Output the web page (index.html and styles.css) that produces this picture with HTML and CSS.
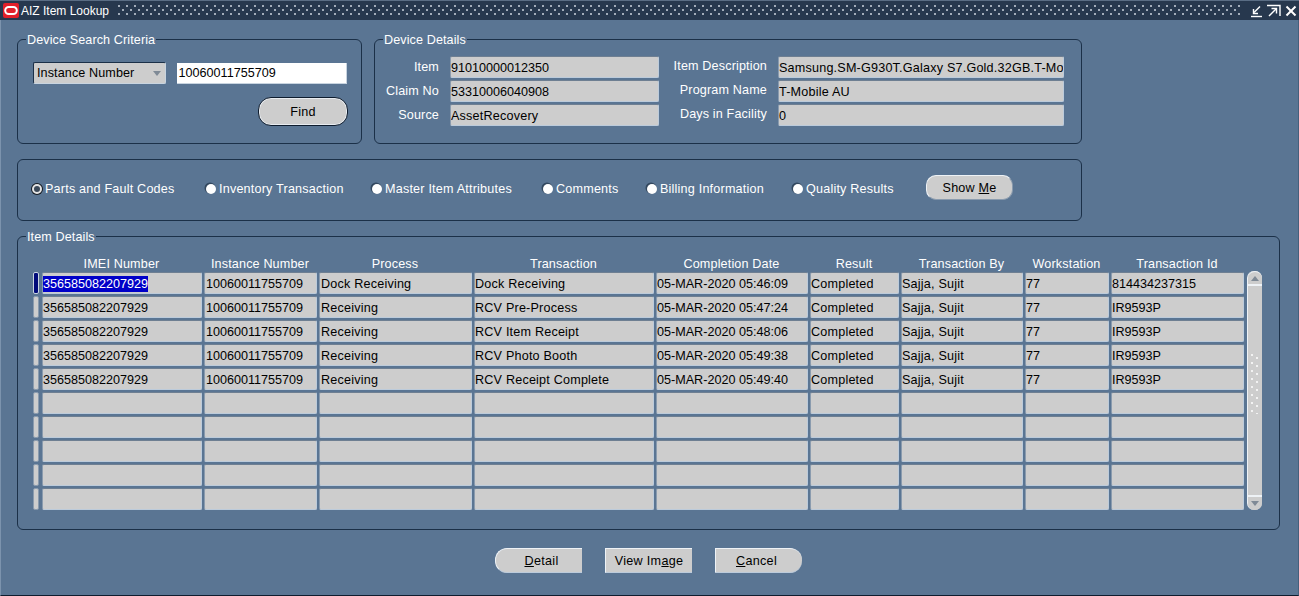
FILE: index.html
```html
<!DOCTYPE html>
<html lang="en">
<head>
    <meta charset="UTF-8">
    <meta name="viewport" content="width=device-width, initial-scale=1.0">
    <title>AIZ Item Lookup</title>
    <link rel="stylesheet" href="styles.css">
</head>
<body>
<div class="window">
    <div class="titlebar">
        <svg class="logo" width="18" height="17" viewBox="0 0 18 17">
            <rect x="1" y="1" width="16" height="15" rx="2" fill="#e3202a"/>
            <rect x="3.2" y="5" width="11.6" height="7" rx="3.5" fill="none" stroke="#fff" stroke-width="2"/>
        </svg>
        <span class="title">AIZ Item Lookup</span>
        <div class="dots"></div>
        <div class="winbtns">
            <svg width="14" height="14" viewBox="0 0 14 14" fill="none" stroke="#fff" stroke-width="1.4">
                <path d="M1 12.5H12"/><path d="M10 2.5L4 8.5"/><path d="M3.5 5V9.5H8"/>
            </svg>
            <svg width="14" height="14" viewBox="0 0 14 14" fill="none" stroke="#fff" stroke-width="1.4">
                <path d="M0 1.5H13V12"/><path d="M2 12L9 5"/><path d="M4.5 4.5H9.5V9.5"/>
            </svg>
            <svg width="14" height="14" viewBox="0 0 14 14" fill="none" stroke="#fff" stroke-width="2">
                <path d="M2.5 2.5L11.5 11.5"/><path d="M11.5 2.5L2.5 11.5"/>
            </svg>
        </div>
    </div>

    <div class="content">
        <div class="top-row">
            <fieldset class="group search-group">
                <legend>Device Search Criteria</legend>
                <div class="search-row">
                    <div class="poplist">
                        <span>Instance Number</span>
                        <i class="arrow"></i>
                    </div>
                    <div class="text-input">10060011755709</div>
                </div>
                <div class="find-row">
                    <div class="btn btn-find">Find</div>
                </div>
            </fieldset>

            <fieldset class="group details-group">
                <legend>Device Details</legend>
                <div class="details-grid">
                    <label class="lbl">Item</label>
                    <div class="cell">91010000012350</div>
                    <label class="lbl lbl-up">Item Description</label>
                    <div class="cell cell-text">Samsung.SM-G930T.Galaxy S7.Gold.32GB.T-Mobile</div>
                    <label class="lbl">Claim No</label>
                    <div class="cell">53310006040908</div>
                    <label class="lbl lbl-up">Program Name</label>
                    <div class="cell cell-text">T-Mobile AU</div>
                    <label class="lbl">Source</label>
                    <div class="cell cell-text">AssetRecovery</div>
                    <label class="lbl lbl-up">Days in Facility</label>
                    <div class="cell">0</div>
                </div>
            </fieldset>
        </div>

        <div class="group radio-group">
            <div class="radio r1 checked"><i></i>Parts and Fault Codes</div>
            <div class="radio r2"><i></i>Inventory Transaction</div>
            <div class="radio r3"><i></i>Master Item Attributes</div>
            <div class="radio r4"><i></i>Comments</div>
            <div class="radio r5"><i></i>Billing Information</div>
            <div class="radio r6"><i></i>Quality Results</div>
            <div class="btn btn-show"><span>Show <u>M</u>e</span></div>
        </div>

        <fieldset class="group items-group">
            <legend>Item Details</legend>
            <div class="items-wrap">
                <div class="items-table">
                    <div class="head"></div>
                    <div class="head">IMEI Number</div>
                    <div class="head">Instance Number</div>
                    <div class="head">Process</div>
                    <div class="head">Transaction</div>
                    <div class="head">Completion Date</div>
                    <div class="head">Result</div>
                    <div class="head">Transaction By</div>
                    <div class="head">Workstation</div>
                    <div class="head">Transaction Id</div>

                    <div class="marker current"></div>
                    <div class="cell"><span class="selected">356585082207929</span></div>
                    <div class="cell">10060011755709</div>
                    <div class="cell">Dock Receiving</div>
                    <div class="cell">Dock Receiving</div>
                    <div class="cell">05-MAR-2020 05:46:09</div>
                    <div class="cell">Completed</div>
                    <div class="cell">Sajja, Sujit</div>
                    <div class="cell">77</div>
                    <div class="cell">814434237315</div>

                    <div class="marker"></div>
                    <div class="cell">356585082207929</div>
                    <div class="cell">10060011755709</div>
                    <div class="cell">Receiving</div>
                    <div class="cell">RCV Pre-Process</div>
                    <div class="cell">05-MAR-2020 05:47:24</div>
                    <div class="cell">Completed</div>
                    <div class="cell">Sajja, Sujit</div>
                    <div class="cell">77</div>
                    <div class="cell">IR9593P</div>

                    <div class="marker"></div>
                    <div class="cell">356585082207929</div>
                    <div class="cell">10060011755709</div>
                    <div class="cell">Receiving</div>
                    <div class="cell">RCV Item Receipt</div>
                    <div class="cell">05-MAR-2020 05:48:06</div>
                    <div class="cell">Completed</div>
                    <div class="cell">Sajja, Sujit</div>
                    <div class="cell">77</div>
                    <div class="cell">IR9593P</div>

                    <div class="marker"></div>
                    <div class="cell">356585082207929</div>
                    <div class="cell">10060011755709</div>
                    <div class="cell">Receiving</div>
                    <div class="cell">RCV Photo Booth</div>
                    <div class="cell">05-MAR-2020 05:49:38</div>
                    <div class="cell">Completed</div>
                    <div class="cell">Sajja, Sujit</div>
                    <div class="cell">77</div>
                    <div class="cell">IR9593P</div>

                    <div class="marker"></div>
                    <div class="cell">356585082207929</div>
                    <div class="cell">10060011755709</div>
                    <div class="cell">Receiving</div>
                    <div class="cell">RCV Receipt Complete</div>
                    <div class="cell">05-MAR-2020 05:49:40</div>
                    <div class="cell">Completed</div>
                    <div class="cell">Sajja, Sujit</div>
                    <div class="cell">77</div>
                    <div class="cell">IR9593P</div>

                    <div class="marker"></div><div class="cell"></div><div class="cell"></div><div class="cell"></div><div class="cell"></div><div class="cell"></div><div class="cell"></div><div class="cell"></div><div class="cell"></div><div class="cell"></div>
                    <div class="marker"></div><div class="cell"></div><div class="cell"></div><div class="cell"></div><div class="cell"></div><div class="cell"></div><div class="cell"></div><div class="cell"></div><div class="cell"></div><div class="cell"></div>
                    <div class="marker"></div><div class="cell"></div><div class="cell"></div><div class="cell"></div><div class="cell"></div><div class="cell"></div><div class="cell"></div><div class="cell"></div><div class="cell"></div><div class="cell"></div>
                    <div class="marker"></div><div class="cell"></div><div class="cell"></div><div class="cell"></div><div class="cell"></div><div class="cell"></div><div class="cell"></div><div class="cell"></div><div class="cell"></div><div class="cell"></div>
                    <div class="marker"></div><div class="cell"></div><div class="cell"></div><div class="cell"></div><div class="cell"></div><div class="cell"></div><div class="cell"></div><div class="cell"></div><div class="cell"></div><div class="cell"></div>
                </div>
                <div class="scrollbar">
                    <div class="scroll-end scroll-up"><i></i></div>
                    <div class="scroll-track"><div class="grip"></div></div>
                    <div class="scroll-end scroll-down"><i></i></div>
                </div>
            </div>
        </fieldset>

        <div class="actions">
            <div class="btn btn-action left"><span><u>D</u>etail</span></div>
            <div class="btn btn-action">View Im<u>a</u>ge</div>
            <div class="btn btn-action right"><span><u>C</u>ancel</span></div>
        </div>
    </div>
</div>
</body>
</html>
```

FILE: styles.css
```css
html, body {
    margin: 0;
    padding: 0;
    height: 100%;
    overflow: hidden;
}
body {
    background-color: #5a7593;
    font-family: "Liberation Sans", Arial, sans-serif;
    font-size: 12.6px;
    color: #000;
}
.window {
    height: 596px;
    box-sizing: border-box;
    border-bottom: 1px solid #0e1c2e;
    border-left: 1px solid #7c93ad;
    border-right: 1px solid #46607c;
}

/* title bar */
.titlebar {
    display: flex;
    align-items: center;
    height: 20px;
    margin-left: -1px;
    margin-right: -1px;
    background-color: #27384e;
    border-top: 1px solid #5a6d84;
    box-sizing: border-box;
}
.logo {
    margin-left: 2px;
    flex: none;
}
.title {
    color: #fff;
    font-size: 12px;
    margin-left: 1px;
    width: 97px;
    flex: none;
    white-space: nowrap;
}
.dots {
    flex: none;
    width: 1124px;
    height: 11px;
    background-image:
        radial-gradient(circle at 1px 1px, #a3adba 0.9px, transparent 1px),
        radial-gradient(circle at 5px 5px, #a3adba 0.9px, transparent 1px),
        radial-gradient(circle at 1px 9px, #a3adba 0.9px, transparent 1px);
    background-size: 8px 11px;
}
.winbtns {
    display: flex;
    gap: 3px;
    margin-left: 8px;
}

/* main form */
.content {
    padding: 11px 18px 0 16px;
}
.top-row {
    display: flex;
    gap: 12px;
}
.group {
    border: 1px solid #1b3048;
    border-radius: 6px;
    margin: 0;
    box-sizing: border-box;
}
fieldset.group {
    padding: 0;
    min-width: 0;
}
legend {
    color: #fff;
    padding: 2px 1px 0;
    margin-left: 8px;
    line-height: 15px;
    letter-spacing: 0.1px;
}
.search-group {
    width: 345px;
    height: 113px;
}
.details-group {
    width: 708px;
    height: 113px;
}
.search-row {
    display: flex;
    gap: 11px;
    padding: 14px 14px 0 15px;
}
.poplist {
    width: 133px;
    height: 22px;
    box-sizing: border-box;
    display: flex;
    align-items: center;
    justify-content: space-between;
    padding: 0 4px 0 3px;
    background-color: #cdcdcd;
    border: 1px solid #1b3048;
    border-right-color: #c8d4e0;
    border-bottom-color: #c8d4e0;
    border-radius: 2px;
}
.poplist span {
    letter-spacing: 0.1px;
}
.arrow {
    width: 0;
    height: 0;
    border-left: 4px solid transparent;
    border-right: 4px solid transparent;
    border-top: 5px solid #7f8a96;
}
.text-input {
    width: 171px;
    height: 21px;
    line-height: 21px;
    margin-top: 1px;
    padding-left: 2px;
    box-sizing: border-box;
    background-color: #fff;
    border-bottom: 1px solid #c8d4e0;
    border-right: 1px solid #c8d4e0;
}
.find-row {
    display: flex;
    justify-content: flex-end;
    padding: 13px 13px 0 0;
}
.btn {
    display: flex;
    align-items: center;
    justify-content: center;
    box-sizing: border-box;
    background-color: #cdcdcd;
    border-top: 1px solid #eef2f6;
    border-left: 1px solid #eef2f6;
    letter-spacing: 0.2px;
}
.btn-find {
    width: 90px;
    height: 29px;
    border: 1px solid #0e1c2e;
    border-radius: 13px;
    box-shadow: inset 0 0 0 1px #e8ecf0;
}

/* device details fields */
.details-grid {
    display: grid;
    grid-template-columns: 64px 209px 119px 286px;
    grid-auto-rows: 22px;
    row-gap: 2px;
    padding: 8px 0 0 11px;
}
.lbl {
    color: #fff;
    text-align: right;
    line-height: 22px;
    padding-right: 11px;
    white-space: nowrap;
    letter-spacing: 0.15px;
}
.details-grid .lbl-up {
    line-height: 21px;
}
.cell {
    height: 22px;
    line-height: 22px;
    box-sizing: border-box;
    background-color: #cdcdcd;
    overflow: hidden;
    white-space: nowrap;
    border-top: 1px solid #6e7f92;
    border-left: 1px solid #8a9bae;
    border-right: 1px solid #bccbdb;
    border-bottom: 1px solid #bccbdb;
    border-radius: 2px;
}
.cell-text {
    letter-spacing: 0.2px;
}

/* radio strip */
.radio-group {
    width: 1065px;
    height: 62px;
    margin-top: 15px;
    display: flex;
    align-items: center;
    color: #fff;
    padding-left: 14px;
}
.radio {
    display: flex;
    align-items: center;
    white-space: nowrap;
    padding-bottom: 2px;
    letter-spacing: 0.2px;
}
.radio i {
    width: 10px;
    height: 10px;
    border-radius: 50%;
    background-color: #fff;
    margin-right: 3px;
    box-shadow: -1px -1px 0 0.5px #33485f;
}
.radio.checked i {
    box-sizing: border-box;
    background-color: #3a4858;
    border: 2px solid #e4e4e4;
    box-shadow: 0 0 0 1px #151b22;
}
.r1 { width: 174px; }
.r2 { width: 166px; }
.r3 { width: 171px; }
.r4 { width: 104px; }
.r5 { width: 146px; }
.r6 { width: 133px; }
.btn-show {
    width: 87px;
    height: 25px;
    margin-top: -5px;
    border-radius: 10px;
    color: #000;
    border-right: 1px solid #8a9bae;
    border-bottom: 1px solid #8a9bae;
}

/* item details */
.items-group {
    width: 1263px;
    height: 302px;
    margin-top: 7px;
}
.items-wrap {
    display: flex;
    align-items: flex-end;
    padding: 11px 0 0 15px;
}
.items-table {
    display: grid;
    grid-template-columns: 7px 160px 113px 153px 180px 152px 89px 122px 84px 133px;
    grid-template-rows: 14px repeat(10, 22px);
    column-gap: 2px;
    row-gap: 2px;
}
.items-table .cell:nth-child(10n+3),
.items-table .cell:nth-child(10n+4) {
    padding-left: 1px;
}
.items-table .cell:nth-child(10n+4),
.items-table .cell:nth-child(10n+5),
.items-table .cell:nth-child(10n+7),
.items-table .cell:nth-child(10n+8) {
    letter-spacing: 0.2px;
}
.head {
    color: #fff;
    text-align: center;
    line-height: 16px;
    white-space: nowrap;
    padding-right: 1px;
    letter-spacing: 0.15px;
}
.marker {
    height: 22px;
    margin-right: 1px;
    background-color: #cdcdcd;
    border: 1px solid #8a9bae;
    box-sizing: border-box;
    border-radius: 2px;
}
.marker.current {
    background-color: #000a7a;
    border-color: #c8d4e0;
}
.selected {
    background-color: #0000c8;
    color: #fff;
    display: inline-block;
    line-height: 16px;
}
.scrollbar {
    width: 15px;
    height: 239px;
    margin-left: 3px;
    display: flex;
    flex-direction: column;
    background-color: #cdcdcd;
    border-radius: 7px;
    box-sizing: border-box;
    border-left: 1px solid #eef2f6;
}
.scroll-end {
    height: 15px;
    flex: none;
    display: flex;
    align-items: center;
    justify-content: center;
    background-color: #cdcdcd;
}
.scroll-up {
    border-radius: 7px 7px 0 0;
    border-bottom: 2px solid #eef2f6;
    box-sizing: border-box;
    border-top: 1px solid #eef2f6;
}
.scroll-down {
    border-radius: 0 0 7px 7px;
    border-top: 2px solid #eef2f6;
    box-sizing: border-box;
}
.scroll-up i {
    border-left: 4px solid transparent;
    border-right: 4px solid transparent;
    border-bottom: 5px solid #7f8a96;
}
.scroll-down i {
    border-left: 4px solid transparent;
    border-right: 4px solid transparent;
    border-top: 5px solid #7f8a96;
}
.scroll-track {
    flex: 1;
    display: flex;
    align-items: center;
    justify-content: center;
}
.grip {
    width: 9px;
    height: 60px;
    margin-bottom: 14px;
    background-image:
        radial-gradient(circle at 1px 1px, #f2f2f2 0.9px, transparent 1px),
        radial-gradient(circle at 6px 4px, #f2f2f2 0.9px, transparent 1px);
    background-size: 9px 8px;
}

/* bottom buttons */
.actions {
    display: flex;
    justify-content: center;
    gap: 23px;
    margin-top: 18px;
}
.btn-action {
    width: 87px;
    height: 25px;
    border-bottom: 1px solid #bccbdb;
    letter-spacing: 0.3px;
}
.left {
    border-radius: 12px 0 0 12px;
    padding-left: 5px;
}
.right {
    border-radius: 0 12px 12px 0;
    padding-right: 5px;
}
```
